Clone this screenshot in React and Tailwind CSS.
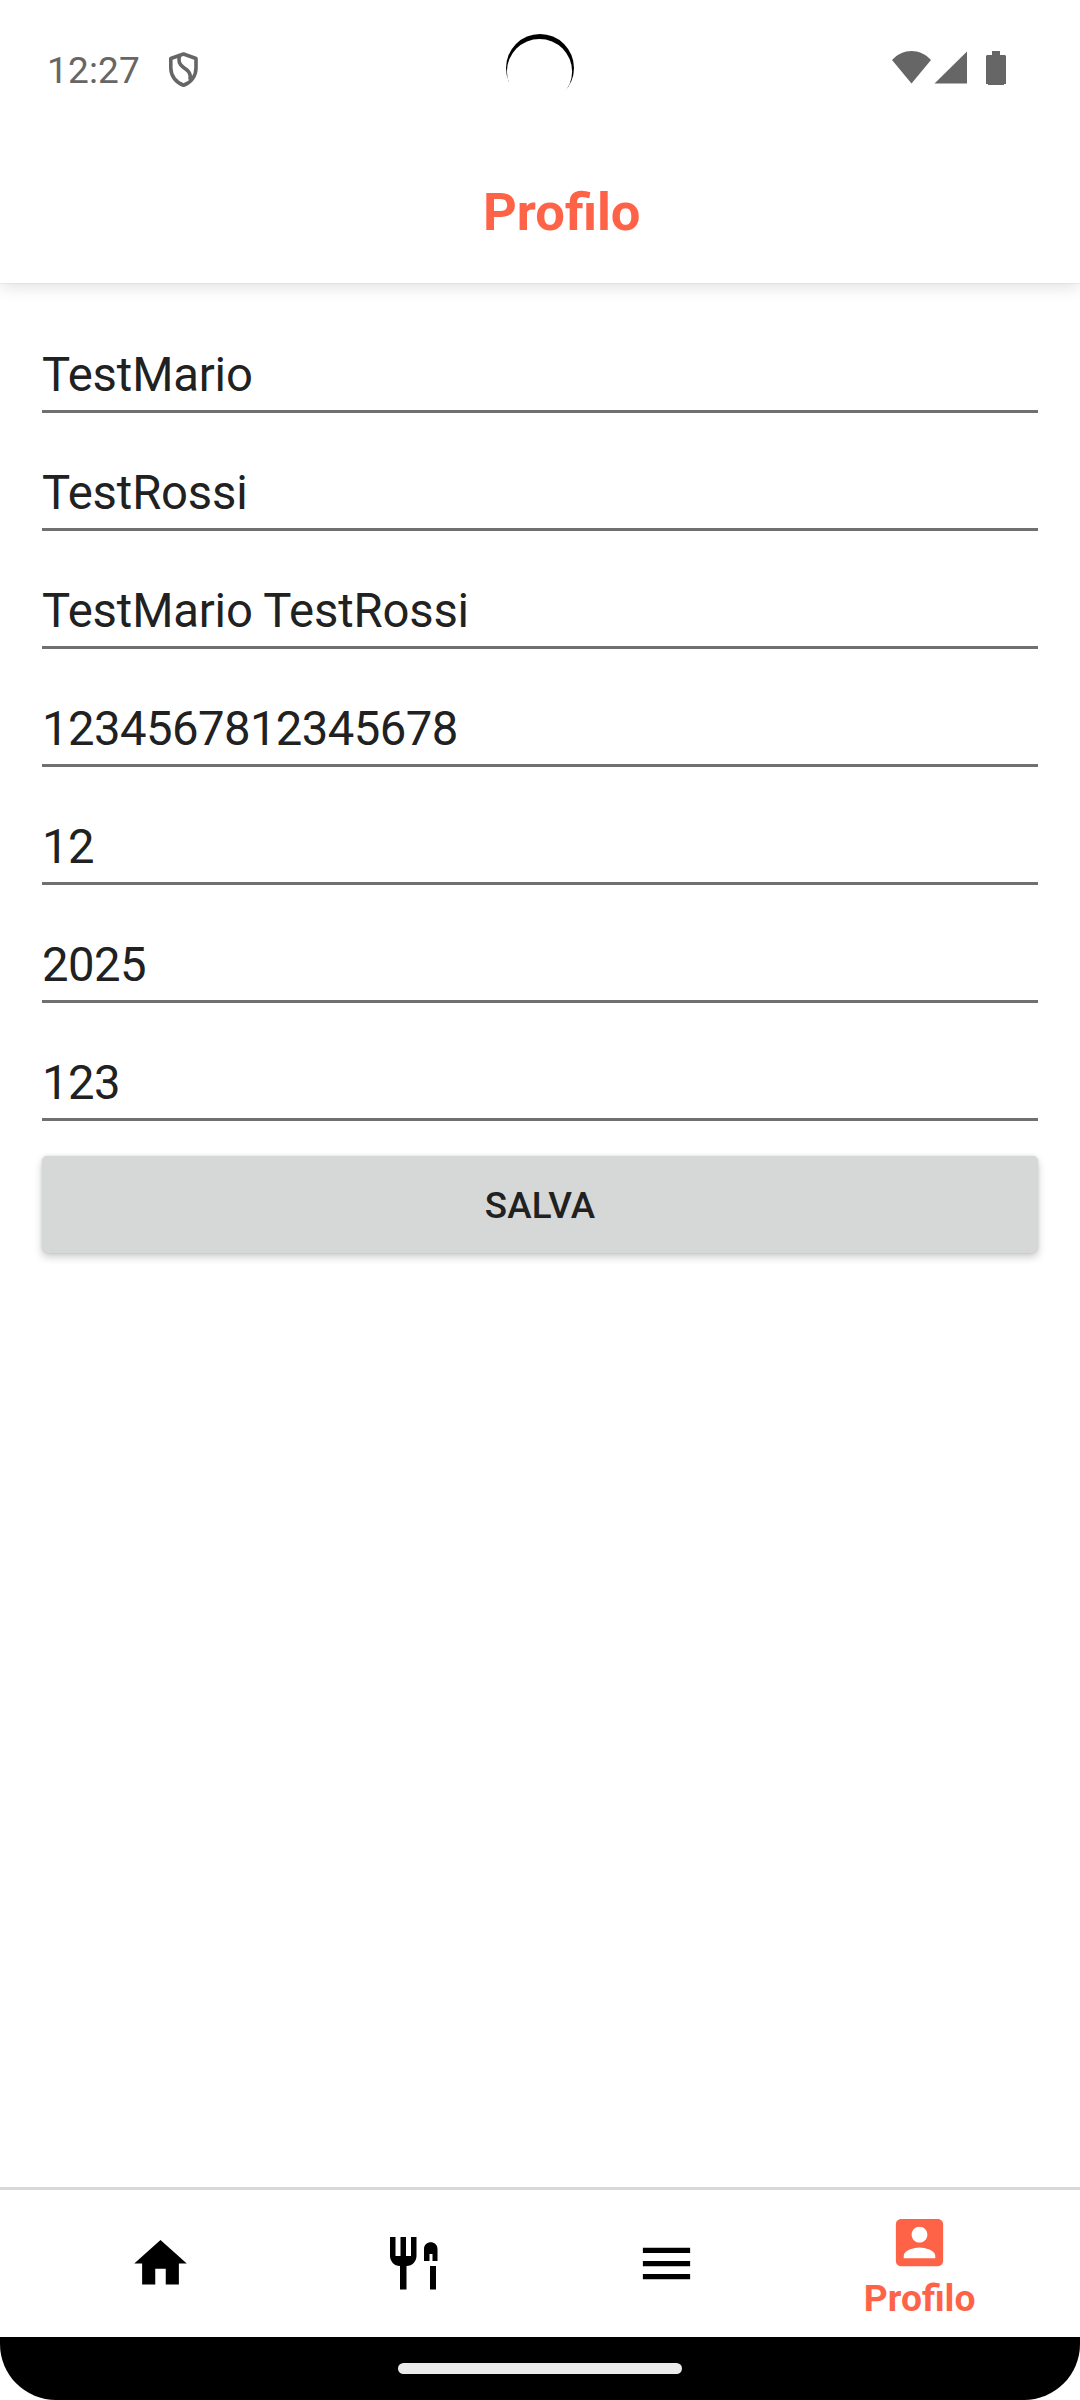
const fields = [
  'TestMario',
  'TestRossi',
  'TestMario TestRossi',
  '1234567812345678',
  '12',
  '2025',
  '123',
];

function StatusBar() {
  return (
    <div className="relative flex h-[136px] items-start justify-between pl-[47px] pr-[74px] text-[#666666]">
      <div className="flex items-start">
        <span className="mt-[49px] w-[121px] text-[37px] leading-[43px] tracking-[0.15px]">12:27</span>
        <svg className="mt-[52px]" width="31" height="36" viewBox="0 0 31 36" fill="none" stroke="#666666" strokeWidth="3.6" strokeLinejoin="round">
          <path d="M15.5 2 L28 6.5 V16 C28 24 23 30.5 15.5 33.3 C8 30.5 2.800 24 2.800 16 V6.500 Z" />
          <path d="M11.500 4 C10 9 11 12 15 15 C20 18.500 23.500 21 22 28" />
        </svg>
      </div>
      <svg className="absolute left-[506px] top-[34px]" width="68" height="68" viewBox="0 0 68 68">
        <circle cx="34" cy="34" r="34" fill="#000" />
        <circle cx="33.5" cy="37.6" r="32.6" fill="#fff" />
        <rect x="0" y="58" width="68" height="10" fill="#fff" />
      </svg>
      <svg className="mt-[51px]" width="114" height="34" viewBox="0 0 114 34" fill="#666666">
        <path d="M0 9 C11 -3 28 -3 39 9 L19.500 32.500 Z" />
        <path d="M42.500 32.500 L75 0.500 V32.500 Z" />
        <path d="M100 0 H108 V4 H113 L114 5 V33 H112 V34 H96 V33 H94 V5 L95 4 H100 Z" />
      </svg>
    </div>
  );
}

function Tab({ children }) {
  return <div className="flex flex-1 flex-col items-center justify-center">{children}</div>;
}

function Icon({ children, className }) {
  return (
    <svg className={className} width="63" height="63" viewBox="0 0 24 24" fill="currentColor">
      {children}
    </svg>
  );
}

export default function App() {
  return (
    <div className="flex h-[2400px] w-[1080px] flex-col overflow-hidden bg-white font-['Roboto',sans-serif] text-[#212121]">
      <header className="relative h-[283px] shrink-0 bg-white shadow-[0_4px_16px_rgba(0,0,0,0.12),0_0_2px_rgba(0,0,0,0.1)]">
        <StatusBar />
        <h1 className="pl-[483px] pt-[45px] text-[52.5px] font-bold leading-[62px] text-[#ff6347]">Profilo</h1>
      </header>
      <main className="flex flex-1 flex-col px-[42px] pt-[12px]">
        {fields.map((value) => (
          <div
            key={value}
            className={`flex h-[118px] items-end border-b-[3px] border-[#707070] pb-[7px] text-[47.25px] leading-[56px] ${
              /^\d+$/.test(value) ? 'tracking-[-0.57px]' : 'tracking-[-0.17px]'
            }`}
          >
            {value}
          </div>
        ))}
        <button className="mt-[35px] h-[97px] rounded-[5px] bg-[#d6d8d7] pt-[2px] text-[36.75px] font-medium tracking-[0.1px] shadow-[0_4px_8px_rgba(0,0,0,0.2),0_0_3px_rgba(0,0,0,0.12)]">
          SALVA
        </button>
      </main>
      <nav className="flex h-[150px] shrink-0 border-t-[3px] border-[#d8d8d8] bg-white pl-[35px] pr-[34px] text-black">
        <Tab>
          <Icon className="mr-[2px]"><path d="M10 20v-6h4v6h5v-8h3L12 3 2 12h3v8z" /></Icon>
        </Tab>
        <Tab>
          <svg width="48" height="54" viewBox="0 0 48 54" fill="currentColor">
            <path d="M0 0h5.500v19h5V0h5.500v19h5V0h5.500v19c0 5-4 10-10 10v23.500h-6.500V29C4 29 0 24 0 19z" />
            <path d="M34 24V12c0-9 13.500-9 13.500 0v12h-5v-7h-3v7zM40 29h6v23.500h-6z" />
          </svg>
        </Tab>
        <Tab>
          <Icon><path d="M3 18h18v-2H3v2zm0-5h18v-2H3v2zm0-7v2h18V6H3z" /></Icon>
        </Tab>
        <Tab>
          <div className="flex flex-col items-center text-[#ff6347]">
            <Icon><path d="M3 5v14c0 1.100.890 2 2 2h14c1.100 0 2-.9 2-2V5c0-1.100-.9-2-2-2H5c-1.110 0-2 .9-2 2zm12 4c0 1.660-1.340 3-3 3s-3-1.340-3-3 1.340-3 3-3 3 1.340 3 3zm-9 8c0-2 4-3.100 6-3.100s6 1.100 6 3.100v1H6v-1z" /></Icon>
            <span className="-mb-[3px] mt-[3px] text-[37.2px] font-bold leading-[43px]">Profilo</span>
          </div>
        </Tab>
      </nav>
      <footer className="flex h-[63px] shrink-0 items-center justify-center rounded-b-[56px] bg-black">
        <div className="h-[11px] w-[284px] rounded-full bg-[#ebebeb]" />
      </footer>
    </div>
  );
}
